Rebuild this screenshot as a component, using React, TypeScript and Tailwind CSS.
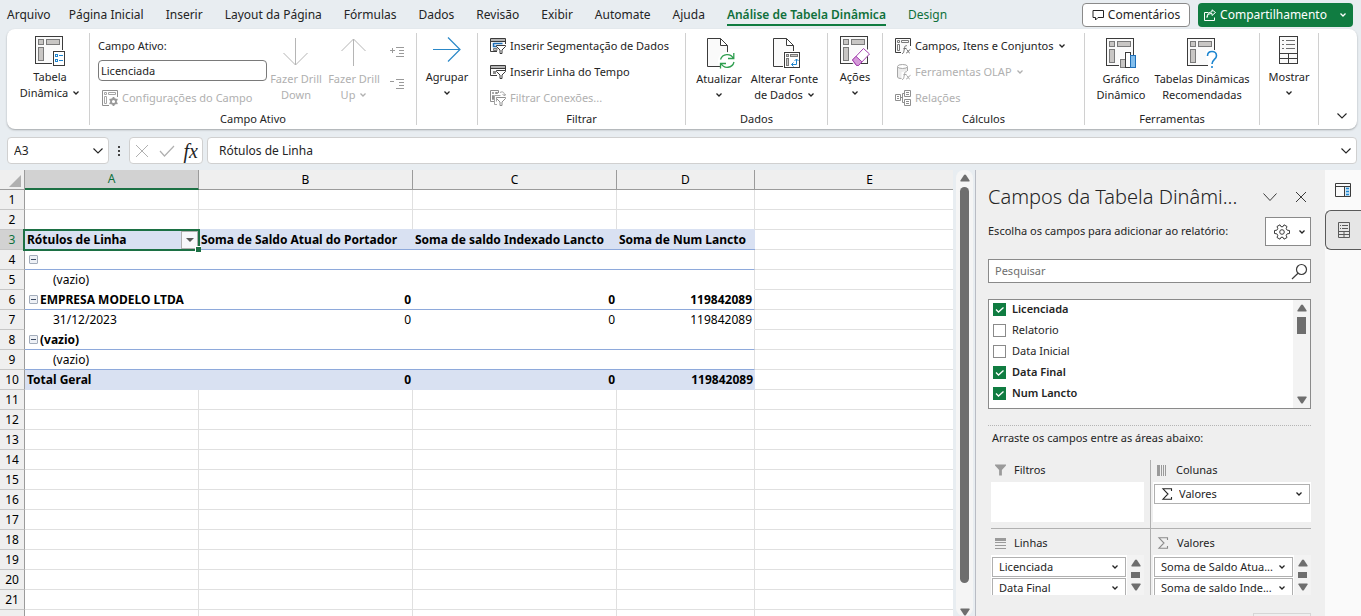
import { useState, type ReactNode } from 'react'
import clsx from 'clsx'

type CellRow = {
  label?: string
  kind?: 'head' | 'group' | 'item' | 'total'
  values?: string[]
  line?: boolean
}

const tabs = [
  'Página Inicial',
  'Inserir',
  'Layout da Página',
  'Fórmulas',
  'Dados',
  'Revisão',
  'Exibir',
  'Automate',
  'Ajuda',
]

const pivotRows: Record<number, CellRow> = {
  3: {
    kind: 'head',
    label: 'Rótulos de Linha',
    values: ['Soma de Saldo Atual do Portador', 'Soma de saldo Indexado Lancto', 'Soma de Num Lancto'],
    line: true,
  },
  4: { kind: 'group', label: '', line: true },
  5: { kind: 'item', label: '(vazio)' },
  6: { kind: 'group', label: 'EMPRESA MODELO LTDA', values: ['0', '0', '119842089'], line: true },
  7: { kind: 'item', label: '31/12/2023', values: ['0', '0', '119842089'] },
  8: { kind: 'group', label: '(vazio)', line: true },
  9: { kind: 'item', label: '(vazio)', line: true },
  10: { kind: 'total', label: 'Total Geral', values: ['0', '0', '119842089'] },
}

const fieldNames = ['Licenciada', 'Relatorio', 'Data Inicial', 'Data Final', 'Num Lancto']

/* ---------- icons ---------- */

function Chevron({ className }: { className?: string }) {
  return (
    <svg viewBox="0 0 8 6" className={clsx('h-[6px] w-2 shrink-0', className)} fill="none" stroke="currentColor" strokeWidth="1.3">
      <path d="M1.500 1.500 4 4l2.500-2.500" />
    </svg>
  )
}

function WideChevron({ className }: { className?: string }) {
  return (
    <svg viewBox="0 0 12 8" className={clsx('h-2 w-3 shrink-0', className)} fill="none" stroke="currentColor" strokeWidth="1.1">
      <path d="M1.500 1.500 6 6l4.500-4.500" />
    </svg>
  )
}

function Triangle({ down }: { down?: boolean }) {
  return (
    <svg viewBox="0 0 10 8" className="h-2 w-[10px] shrink-0 fill-[#6e6e6e]">
      <path d={down ? 'M1 .5h8q1 0 .6.9L6 7q-1 1-2 0L.4 1.4Q0 .5 1 .5z' : 'M1 7.5h8q1 0 .6-.9L6 1Q5 0 4 1L.4 6.6Q0 7.5 1 7.5z'} />
    </svg>
  )
}

function PivotBase() {
  return (
    <g stroke="#3b3b3b">
      <rect x="1.5" y=".5" width="27" height="27" fill="#fafafa" />
      <g fill="#c8c6c4" stroke="#7a7a7a">
        <rect x="4.500" y="3.500" width="5" height="5" />
        <rect x="12.500" y="3.500" width="13" height="5" />
        <rect x="4.500" y="11.500" width="5" height="13" />
      </g>
    </g>
  )
}

function BigIcon({ children }: { children: ReactNode }) {
  return (
    <svg viewBox="0 0 32 32" className="mb-px h-8 w-8 shrink-0" fill="none">
      {children}
    </svg>
  )
}

function PivotTableIcon() {
  return (
    <BigIcon>
      <PivotBase />
      <path d="M18 14h14v17H18z" fill="#fff" />
      <rect x="19.500" y="15.500" width="11" height="14" fill="#fff" stroke="#3b3b3b" />
      <g stroke="#1e86d0">
        <rect x="21.500" y="18.500" width="2" height="2" />
        <rect x="21.500" y="23.500" width="2" height="2" />
        <path d="M25 19.500h4M25 24.500h4" />
      </g>
    </BigIcon>
  )
}

function ArrowIcon({ dir }: { dir: 'down' | 'up' | 'right' }) {
  return (
    <BigIcon>
      {dir === 'down' && <path d="M15.500 0v27M3.500 15l12 12 12-12" stroke="#b5b5b5" />}
      {dir === 'up' && <path d="M15.500 28V1M3.500 13l12-12 12 12" stroke="#b5b5b5" />}
      {dir === 'right' && <path d="M2 13.500h27M17 1.500l12 12-12 12" stroke="#2b88c8" strokeWidth="1.200" />}
    </BigIcon>
  )
}

function PageBase() {
  return <path d="M4.500.500h13l7 7v21h-20zM17.500.500v7h7" fill="#fafafa" stroke="#3b3b3b" />
}

function RefreshIcon() {
  return (
    <BigIcon>
      <PageBase />
      <circle cx="24" cy="23" r="9" fill="#fff" />
      <path d="M17.500 21.500a7 7 0 0 1 13-1M31 24a7 7 0 0 1-13 1.500M30.800 15v5.500H25M17.500 30.500V25.500H23" stroke="#2f9e4f" strokeWidth="1.300" />
    </BigIcon>
  )
}

function SourceIcon() {
  return (
    <BigIcon>
      <PageBase />
      <path d="M14 13h18v18H14z" fill="#fff" />
      <rect x="15.500" y="14.500" width="15" height="15" fill="#fff" stroke="#3b3b3b" />
      <g stroke="#7a7a7a" fill="#c8c6c4">
        <rect x="17.500" y="16.500" width="2" height="2" />
        <rect x="21.500" y="16.500" width="7" height="2" />
        <rect x="17.500" y="20.500" width="2" height="7" />
      </g>
      <path d="M22.500 26.500h5V21M25.500 23l2-2 2 2M24.500 24.500l-2 2 2 2" stroke="#1e86d0" />
    </BigIcon>
  )
}

function ActionsIcon() {
  return (
    <BigIcon>
      <PivotBase />
      <path d="m11 25 14-14 7 5-14 15z" fill="#fff" />
      <path d="m13.500 24 11-11.500 6 5.500-11 11.500h-2z" fill="#fff" stroke="#a33fae" />
      <path d="m13.500 24 3.500-3.700 6 5.600-3.500 3.600h-1.800z" fill="#d59ad9" stroke="#a33fae" />
    </BigIcon>
  )
}

function PivotChartIcon() {
  return (
    <BigIcon>
      <PivotBase />
      <path d="M14 20h5v-7h7v4h6v14H14z" fill="#fff" />
      <rect x="15.500" y="21.500" width="5" height="8" fill="#c8c6c4" stroke="#7a7a7a" />
      <rect x="20.500" y="14.500" width="5" height="15" fill="#fff" stroke="#3b3b3b" />
      <rect x="25.500" y="17.500" width="5" height="12" fill="#83beec" stroke="#1e6fb8" />
    </BigIcon>
  )
}

function RecommendedIcon() {
  return (
    <BigIcon>
      <PivotBase />
      <path d="M20 12h12v19H22v-9h-2z" fill="#fff" />
      <path d="M21.500 18c0-3 2-4.500 4.500-4.500s4.500 1.700 4.500 4.200c0 3.800-4.500 3.600-4.500 8.300M26 28v2" stroke="#1e86d0" strokeWidth="1.600" />
    </BigIcon>
  )
}

function ShowIcon() {
  return (
    <BigIcon>
      <rect x="6.500" y=".5" width="18" height="27" fill="#fafafa" stroke="#3b3b3b" />
      <path d="M6.500 17.500h18M6.500 22.500h18M15.500 17.500v10" stroke="#3b3b3b" />
      <path d="M9 4.500h2M13 4.500h9M9 8.500h2M13 8.500h9M9 12.500h2M13 12.500h9" stroke="#6e6e6e" />
    </BigIcon>
  )
}

function SmallIcon({ children }: { children: ReactNode }) {
  return (
    <svg viewBox="0 0 16 16" className="h-4 w-4 shrink-0" fill="none">
      {children}
    </svg>
  )
}

function FieldSettingsIcon() {
  return (
    <SmallIcon>
      <path d="M7 15.500H.5V.5h15V7" stroke="#8f8f8f" />
      <path d="M2.500 2.500h2v2h-2zM6.500 2.500h7v2h-7zM2.500 6.500h2v7h-2z" stroke="#a6a6a6" />
      <circle cx="11.500" cy="11.500" r="2.500" stroke="#9a9a9a" strokeWidth="1.800" />
      <path d="M11.500 7v2M11.500 14v2M7.500 9.200l1.800 1M13.700 12.800l1.800 1M15.500 9.200l-1.800 1M9.300 12.800l-1.800 1" stroke="#9a9a9a" strokeWidth="1.800" />
    </SmallIcon>
  )
}

function ExpandIcon({ plus }: { plus?: boolean }) {
  return (
    <SmallIcon>
      <path d={plus ? 'M1 5.500h5M3.500 3v5' : 'M1 4.500h4'} stroke="#9a9a9a" />
      <path d="M7 2.500h8M10 5.500h5M10 8.500h5M7 11.500h8" stroke="#9a9a9a" />
    </SmallIcon>
  )
}

const funnel = 'M6.500 7.500h9v1l-3.500 3.500v3.500h-2V12L6.500 8.500z'

function SlicerIcon() {
  return (
    <SmallIcon>
      <path d="M7 13.500H.5V.5h15V6" fill="#fafafa" stroke="#3b3b3b" />
      <path d="M1 1h14v2H1z" fill="#b5b5b5" />
      <path d="M.5 3.500h15" stroke="#3b3b3b" />
      <path d="M3.500 5.500h9M3.500 5v3.500H7" stroke="#1e6fb8" strokeWidth="1.500" />
      <path d="M3.500 10.500H7v2H3.500z" fill="#c8c6c4" stroke="#7a7a7a" />
      <path d={funnel} fill="#fff" stroke="#3b3b3b" />
    </SmallIcon>
  )
}

function TimelineIcon() {
  return (
    <SmallIcon>
      <path d="M7 11.500H.5V1.500h15V7" fill="#fafafa" stroke="#3b3b3b" />
      <path d="M1 2h14v2H1z" fill="#b5b5b5" />
      <path d="M.5 4.500h15" stroke="#3b3b3b" />
      <path d="M3 7h3v3H3z" fill="#8a8a8a" />
      <path d="M6.500 6.500h9v1L12 11v3.500h-2V11L6.500 7.500z" fill="#fff" stroke="#3b3b3b" />
    </SmallIcon>
  )
}

function ConnectionsIcon() {
  return (
    <SmallIcon>
      <path d="M4 11.500H.5V.5h8V3M2.500 2.500h1v1h-1zM5.500 2.500h2v1h-2zM2.500 5.500h1v4h-1z" stroke="#8f8f8f" />
      <path d="M7 14.500H4.500v-9h6M6.500 7.500v4M10 2.500c3-1.500 4.500 0 4.500 3M12.500 4l2 2 1.500-2" stroke="#a6a6a6" />
      <path d={funnel} fill="#fff" stroke="#8f8f8f" />
    </SmallIcon>
  )
}

function FxMark({ color }: { color: string }) {
  return <path d="M7 15.500c1.500 0 1.700-1 2-3l.6-3c.3-1.600 1-2 2.200-1.800M8.500 10.500h3M11.500 11.500c1.300 0 1.700 3.500 3.200 3.500M15.500 11.300c-1.500 0-2.500 3.700-4.300 3.700" stroke={color} />
}

function CalcFieldsIcon() {
  return (
    <SmallIcon>
      <path d="M6 14.500H.5V.5h15V8" fill="#fafafa" stroke="#3b3b3b" />
      <path d="M2.500 2.500h2v2h-2zM6.500 2.500h7v2h-7zM2.500 6.500h2v6h-2z" stroke="#7a7a7a" />
      <FxMark color="#6e6e6e" />
    </SmallIcon>
  )
}

function OlapIcon() {
  return (
    <SmallIcon>
      <path d="M2.500 3v10c0 1 2 1.500 4 1.500V8l6-1V3z" fill="#ececec" />
      <path d="M2.500 3v10c0 1 2 1.500 4 1.500M12.500 3v4" stroke="#a6a6a6" />
      <ellipse cx="7.500" cy="2.500" rx="5" ry="2" fill="#fff" stroke="#a6a6a6" />
      <FxMark color="#a6a6a6" />
    </SmallIcon>
  )
}

function RelationsIcon() {
  return (
    <SmallIcon>
      <path d="M.5 4.500h5v6h-5zM9.500.500h6v6h-6zM9.500 9.500h6v6h-6zM5.500 7.500h2M9.500 3.500h-2v9h2M2 6.500h2M2 8.500h2M11 2.500h3M11 4.500h3M11 11.500h3M11 13.500h3" stroke="#8f8f8f" />
    </SmallIcon>
  )
}

function GearIcon() {
  return (
    <svg viewBox="0 0 16 16" className="h-4 w-4 shrink-0" fill="none" stroke="#3b3b3b">
      <path d="M6 .8 7 2.700h2L10 .8l3 1.700-.8 2.200 1 1.500 2.300.3v3l-2.300.3-1 1.500.8 2.200-3 1.700-1-1.900H7l-1 1.900-3-1.700.8-2.200-1-1.500L.5 9.500v-3l2.300-.3 1-1.500L3 2.500z" />
      <circle cx="8" cy="8" r="2.300" />
    </svg>
  )
}

function SigmaIcon({ className }: { className?: string }) {
  return (
    <svg viewBox="0 0 12 12" className={clsx('h-3 w-3 shrink-0', className)} fill="none" stroke="currentColor" strokeWidth="1.100">
      <path d="M10.500 3V.8H2L7 6l-5 5.200h8.500V9" />
    </svg>
  )
}

/* ---------- ribbon ---------- */

function Group({ label, className, children }: { label?: string; className: string; children: ReactNode }) {
  return (
    <section className={clsx('my-1 flex shrink-0 flex-col border-r border-[#d0d0d0]', className)}>
      <div className="flex h-[78px] shrink-0">{children}</div>
      {label && <div className="h-4 shrink-0 text-center leading-4">{label}</div>}
    </section>
  )
}

function BigButton({ icon, lines, arrow, disabled, className }: { icon: ReactNode; lines: string[]; arrow?: boolean; disabled?: boolean; className?: string }) {
  return (
    <button type="button" disabled={disabled} className={clsx('flex flex-col items-center leading-4 whitespace-nowrap', disabled && 'text-[#b0b0b0]', className)}>
      {icon}
      {lines.map((line, i) => (
        <span key={line} className="flex h-4 items-center gap-1">
          {line}
          {arrow && lines.length > 1 && i === lines.length - 1 && <Chevron />}
        </span>
      ))}
      {arrow && lines.length === 1 && (
        <span className="flex h-4 items-center">
          <Chevron />
        </span>
      )}
    </button>
  )
}

function RowButton({ icon, label, arrow, disabled }: { icon: ReactNode; label: string; arrow?: boolean; disabled?: boolean }) {
  return (
    <button type="button" disabled={disabled} className={clsx('flex h-[26px] items-center gap-1 whitespace-nowrap', disabled && 'text-[#b0b0b0]')}>
      {icon}
      {label}
      {arrow && <Chevron />}
    </button>
  )
}

function Ribbon() {
  return (
    <div className="mr-1 ml-[7px] flex h-[100px] rounded-lg bg-white text-[11px] shadow-[0_1px_2px_rgba(0,0,0,.3)]">
      <Group className="w-[83px]">
        <BigButton className="w-full pt-[3px] pl-1" icon={<PivotTableIcon />} lines={['Tabela', 'Dinâmica']} arrow />
      </Group>
      <Group className="w-[327px]" label="Campo Ativo">
        <div className="ml-2 flex w-[169px] flex-col">
          <label htmlFor="active-field" className="h-[27px] leading-[26px]">
            Campo Ativo:
          </label>
          <input id="active-field" defaultValue="Licenciada" className="h-[21px] rounded border border-[#7a7a7a] px-[2px] outline-none" />
          <div className="mt-1 ml-1">
            <RowButton icon={<FieldSettingsIcon />} label="Configurações do Campo" disabled />
          </div>
        </div>
        <BigButton className="w-[58px] pt-[5px]" icon={<ArrowIcon dir="down" />} lines={['Fazer Drill', 'Down']} disabled />
        <BigButton className="w-[58px] pt-[5px]" icon={<ArrowIcon dir="up" />} lines={['Fazer Drill', 'Up']} arrow disabled />
        <div className="ml-[6px] flex flex-col gap-4 pt-3">
          <button type="button" aria-label="Expandir campo">
            <ExpandIcon plus />
          </button>
          <button type="button" aria-label="Recolher campo">
            <ExpandIcon />
          </button>
        </div>
      </Group>
      <Group className="w-[61px]">
        <BigButton className="w-full pt-[3px]" icon={<ArrowIcon dir="right" />} lines={['Agrupar']} arrow />
      </Group>
      <Group className="w-[208px]" label="Filtrar">
        <div className="ml-3 flex flex-col">
          <RowButton icon={<SlicerIcon />} label="Inserir Segmentação de Dados" />
          <RowButton icon={<TimelineIcon />} label="Inserir Linha do Tempo" />
          <RowButton icon={<ConnectionsIcon />} label="Filtrar Conexões..." disabled />
        </div>
      </Group>
      <Group className="w-[142px]" label="Dados">
        <BigButton className="w-[66px] pt-[5px]" icon={<RefreshIcon />} lines={['Atualizar']} arrow />
        <BigButton className="w-[65px] pt-[5px]" icon={<SourceIcon />} lines={['Alterar Fonte', 'de Dados']} arrow />
      </Group>
      <Group className="w-[55px]">
        <BigButton className="w-full pt-[3px]" icon={<ActionsIcon />} lines={['Ações']} arrow />
      </Group>
      <Group className="w-[202px]" label="Cálculos">
        <div className="ml-3 flex flex-col">
          <RowButton icon={<CalcFieldsIcon />} label="Campos, Itens e Conjuntos" arrow />
          <RowButton icon={<OlapIcon />} label="Ferramentas OLAP" arrow disabled />
          <RowButton icon={<RelationsIcon />} label="Relações" disabled />
        </div>
      </Group>
      <Group className="w-[175px]" label="Ferramentas">
        <BigButton className="w-[72px] pt-[5px]" icon={<PivotChartIcon />} lines={['Gráfico', 'Dinâmico']} />
        <BigButton className="w-[90px] pt-[5px]" icon={<RecommendedIcon />} lines={['Tabelas Dinâmicas', 'Recomendadas']} />
      </Group>
      <Group className="w-[59px]">
        <BigButton className="w-full pt-[3px]" icon={<ShowIcon />} lines={['Mostrar']} arrow />
      </Group>
      <button type="button" aria-label="Recolher faixa" className="ml-auto self-end p-[9px]">
        <WideChevron />
      </button>
    </div>
  )
}

function TopBar() {
  return (
    <header className="flex h-[29px] items-center justify-between pr-2 pl-[7px] text-xs">
      <nav className="flex h-full items-center gap-[22px] whitespace-nowrap">
        <a href="#arquivo" className="-mr-1">Arquivo</a>
        {tabs.map((tab) => (
          <a key={tab} href="#guia">
            {tab}
          </a>
        ))}
        <a href="#analise" className="flex h-[23px] items-center border-b-2 border-[#107c41] pt-[2px] font-semibold text-[#0f703b]">
          Análise de Tabela Dinâmica
        </a>
        <a href="#design" className="text-[#0f703b]">
          Design
        </a>
      </nav>
      <div className="flex gap-2">
        <button type="button" className="flex h-6 w-[108px] items-center justify-center gap-1 rounded border border-[#8a8a8a] bg-white">
          <svg viewBox="0 0 12 12" className="h-3 w-3" fill="none" stroke="#242424">
            <path d="M1 1.500h10.500v7H6L3.500 11V8.500H1z" />
          </svg>
          Comentários
        </button>
        <button type="button" className="flex h-6 w-[155px] items-center justify-center gap-1 rounded bg-[#107c41] text-white">
          <svg viewBox="0 0 12 12" className="h-3 w-3" fill="none" stroke="#fff">
            <path d="M4.500 3.500h-4v8h10v-3M3 8.500c.5-3 2-4 5-4v2l3.500-3L8 .8v2C5 3 3 5 3 8.500z" />
          </svg>
          Compartilhamento
          <Chevron className="ml-2" />
        </button>
      </div>
    </header>
  )
}

function FormulaBar() {
  return (
    <div className="mt-2 mr-1 mb-[6px] ml-[7px] flex h-[27px] text-xs">
      <div className="flex w-[102px] items-center rounded border border-[#d0d0d0] bg-white pr-1">
        <input aria-label="Caixa de nome" defaultValue="A3" className="min-w-0 flex-1 px-[6px] outline-none" />
        <WideChevron />
      </div>
      <div className="flex w-5 flex-col items-center justify-center gap-[2px]">
        <i className="h-[2px] w-[2px] bg-[#444]" />
        <i className="h-[2px] w-[2px] bg-[#444]" />
        <i className="h-[2px] w-[2px] bg-[#444]" />
      </div>
      <div className="flex w-[74px] items-center justify-between rounded border border-[#d0d0d0] bg-white px-1">
        <svg viewBox="0 0 16 16" className="h-4 w-4" fill="none" stroke="#b0b0b0">
          <path d="m2 2 12 12M14 2 2 14" />
        </svg>
        <svg viewBox="0 0 16 16" className="h-4 w-4" fill="none" stroke="#b0b0b0" strokeWidth="1.200">
          <path d="m1 8 4.500 5L15 3" />
        </svg>
        <button type="button" aria-label="Inserir função" className="font-['Liberation_Serif',serif] text-xl leading-5 text-[#242424] italic">
          fx
        </button>
      </div>
      <div className="ml-1 flex min-w-0 flex-1 items-center rounded border border-[#d0d0d0] bg-white pr-1">
        <input aria-label="Barra de fórmulas" defaultValue="Rótulos de Linha" className="min-w-0 flex-1 px-[11px] outline-none" />
        <WideChevron />
      </div>
    </div>
  )
}

/* ---------- grid ---------- */

function PivotRow({ index, last }: { index: number; last: boolean }) {
  const row = pivotRows[index]
  const filled = row?.kind === 'head' || row?.kind === 'total'
  const strong = row && row.kind !== 'item'
  const border = !row
    ? index === 2
      ? 'border-r border-b border-r-[#e0e0e0] border-b-[#d9e1f2]'
      : 'border-r border-b border-[#e0e0e0]'
    : row.line
      ? 'border-b border-[#8ea9db]'
      : filled
        ? 'border-b border-[#d9e1f2]'
        : 'border-b border-white'

  return (
    <tr className="h-5">
      <th
        scope="row"
        className={clsx(
          'border-r border-b p-0 text-center leading-[19px] font-normal',
          index === 3 ? 'border-r-[#107c41] border-b-[#c6c6c6] bg-[#d2d2d2] text-[#0f703b]' : 'border-r-[#9b9b9b] border-b-[#c6c6c6] bg-[#efefef]',
        )}
      >
        {!last && index}
      </th>
      <td className={clsx('relative px-[2px] py-0', border, filled && 'bg-[#d9e1f2]', strong && 'font-bold')}>
        <div className={clsx('flex h-[19px] items-center leading-[19px]', row?.kind === 'item' && 'pl-[26px]')}>
          {row?.kind === 'group' && (
            <button type="button" aria-label="Recolher" className="mr-[2px] ml-[2px] grid h-[9px] w-[9px] place-items-center rounded-[1px] border border-[#a3acba] bg-[#eef1f6]">
              <i className="h-px w-[5px] bg-[#3d4b63]" />
            </button>
          )}
          {row?.label}
        </div>
        {index === 3 && (
          <div className="pointer-events-none absolute -top-px -right-px -bottom-[2px] -left-[2px] z-10 border-2 border-[#1c7044]">
            <button type="button" aria-label="Filtrar rótulos" className="pointer-events-auto absolute top-0 right-0 grid h-[18px] w-[17px] place-items-center border border-[#b0b0b0] bg-[#f7f8fb]">
              <svg viewBox="0 0 8 4" className="h-1 w-2 fill-[#5a5a5a]">
                <path d="M0 0h8L4 4z" />
              </svg>
            </button>
            <i className="absolute -right-[3px] -bottom-[3px] h-[6px] w-[6px] border-t border-l border-white bg-[#1c7044]" />
          </div>
        )}
      </td>
      {[0, 1, 2].map((col) => (
        <td
          key={col}
          className={clsx(
            'px-[2px] py-0 leading-[19px] whitespace-nowrap',
            border,
            filled && 'bg-[#d9e1f2]',
            strong && 'font-bold',
            row?.kind !== 'head' && 'text-right',
            row && !filled && col === 2 && 'border-r border-r-[#e0e0e0]',
          )}
        >
          {row?.values?.[col]}
        </td>
      ))}
      <td className="border-r border-b border-[#e0e0e0]" />
    </tr>
  )
}

function Sheet() {
  return (
    <div className="min-w-0 flex-1 overflow-hidden bg-white">
      <table className="w-[985px] table-fixed border-separate border-spacing-0 text-xs text-black">
        <colgroup>
          <col className="w-[25px]" />
          <col className="w-[174px]" />
          <col className="w-[214px]" />
          <col className="w-[204px]" />
          <col className="w-[138px]" />
          <col className="w-[230px]" />
        </colgroup>
        <thead>
          <tr className="h-5 bg-[#efefef]">
            <th aria-label="Selecionar tudo" className="border-r border-b border-[#9b9b9b] p-0">
              <svg viewBox="0 0 12 12" className="mt-[2px] ml-[9px] h-3 w-3 fill-[#b0b0b0]">
                <path d="M12 0v12H0z" />
              </svg>
            </th>
            {['A', 'B', 'C', 'D', 'E'].map((name) => (
              <th
                key={name}
                scope="col"
                className={clsx(
                  'border-r p-0 font-normal',
                  name === 'A' ? 'border-b-2 border-r-[#9b9b9b] border-b-[#1c7044] bg-[#d2d2d2] leading-[18px] text-[#0f703b]' : 'border-b border-[#9b9b9b] leading-[19px]',
                )}
              >
                {name}
              </th>
            ))}
          </tr>
        </thead>
        <tbody>
          {Array.from({ length: 22 }, (_, i) => (
            <PivotRow key={i} index={i + 1} last={i === 21} />
          ))}
        </tbody>
      </table>
    </div>
  )
}

function SheetScrollbar() {
  return (
    <div className="mr-[2px] ml-[3px] flex w-[17px] shrink-0 flex-col items-center rounded-lg bg-[#f5f5f5] pt-1">
      <Triangle />
      <div className="mt-[5px] mb-[25px] w-[9px] flex-1 rounded-full bg-[#6e6e6e]" />
      <Triangle down />
    </div>
  )
}

/* ---------- field pane ---------- */

function FieldList() {
  const [checked, setChecked] = useState(['Licenciada', 'Data Final', 'Num Lancto'])
  const toggle = (name: string) =>
    setChecked((current) => (current.includes(name) ? current.filter((item) => item !== name) : [...current, name]))

  return (
    <div className="mt-4 flex h-[110px] border border-[#8a8a8a] bg-white">
      <div className="-mt-px flex-1 pl-1">
        {fieldNames.map((name) => (
          <label key={name} className={clsx('flex h-[21px] items-center gap-[6px]', checked.includes(name) && 'font-semibold')}>
            <span className="grid">
              <input
                type="checkbox"
                checked={checked.includes(name)}
                onChange={() => toggle(name)}
                className="peer col-start-1 row-start-1 h-[13px] w-[13px] appearance-none border border-[#8a8a8a] bg-white checked:border-[#107c41] checked:bg-[#107c41]"
              />
              <svg viewBox="0 0 13 13" className="pointer-events-none col-start-1 row-start-1 hidden h-[13px] w-[13px] peer-checked:block" fill="none" stroke="#fff" strokeWidth="1.300">
                <path d="m3 6.500 2.500 2.500L10.500 4.500" />
              </svg>
            </span>
            {name}
          </label>
        ))}
      </div>
      <div className="flex w-[17px] flex-col items-center bg-[#f3f3f3] py-1">
        <Triangle />
        <div className="mt-[5px] h-[17px] w-[9px] bg-[#6e6e6e]" />
        <div className="mt-auto">
          <Triangle down />
        </div>
      </div>
    </div>
  )
}

function AreaItem({ label, sigma }: { label: string; sigma?: boolean }) {
  return (
    <button type="button" className="flex h-5 w-full shrink-0 items-center border border-[#b0b0b0] bg-white px-[6px] whitespace-nowrap">
      {sigma && <SigmaIcon className="mr-[6px]" />}
      <span className="truncate">{label}</span>
      <Chevron className="ml-auto" />
    </button>
  )
}

function Area({ icon, title, items, scroll, sigma }: { icon: ReactNode; title: string; items: string[]; scroll?: boolean; sigma?: boolean }) {
  return (
    <div>
      <div className="flex h-5 items-center gap-2 pl-1">
        {icon}
        {title}
      </div>
      <div className="mt-[2px] flex h-10 overflow-hidden bg-white">
        <div className="flex min-w-0 flex-1 flex-col gap-px p-px pt-[2px]">
          {items.map((item) => (
            <AreaItem key={item} label={item} sigma={sigma} />
          ))}
        </div>
        {scroll && (
          <div className="flex w-[17px] flex-col items-center justify-between bg-[#f3f3f3] py-1">
            <Triangle />
            <div className="h-[6px] w-[9px] bg-[#6e6e6e]" />
            <Triangle down />
          </div>
        )}
      </div>
    </div>
  )
}

function FieldPane() {
  return (
    <aside className="w-[350px] shrink-0 overflow-hidden border-l border-[#b9bcc4] bg-[#efefef] pr-[14px] pl-3 text-[11px]">
      <div className="flex h-[47px] items-center pt-[7px]">
        <h2 className="flex-1 text-xl font-light whitespace-nowrap">Campos da Tabela Dinâmi...</h2>
        <button type="button" aria-label="Opções do painel" className="mr-[18px]">
          <svg viewBox="0 0 14 8" className="h-2 w-[14px]" fill="none" stroke="#3b3b3b">
            <path d="m.5.500 6.500 7 6.500-7" />
          </svg>
        </button>
        <button type="button" aria-label="Fechar" className="mr-1">
          <svg viewBox="0 0 12 12" className="h-3 w-3" fill="none" stroke="#3b3b3b">
            <path d="m1 1 10 10M11 1 1 11" />
          </svg>
        </button>
      </div>
      <div className="flex items-center justify-between">
        <span>Escolha os campos para adicionar ao relatório:</span>
        <button type="button" aria-label="Ferramentas" className="flex h-[29px] w-[46px] items-center justify-center gap-2 border border-[#8a8a8a] bg-white pl-1">
          <GearIcon />
          <Chevron />
        </button>
      </div>
      <div className="mt-[13px] flex h-6 items-center border border-[#8a8a8a] bg-white pr-[2px]">
        <input aria-label="Pesquisar" placeholder="Pesquisar" className="min-w-0 flex-1 px-[6px] outline-none placeholder:text-[#6e6e6e]" />
        <svg viewBox="0 0 17 17" className="h-[17px] w-[17px]" fill="none" stroke="#3b3b3b" strokeWidth="1.200">
          <circle cx="10.500" cy="6.500" r="5" />
          <path d="M7 10.200 1 16" />
        </svg>
      </div>
      <FieldList />
      <div className="mt-4 border-t border-dotted border-[#b5b5b5]" />
      <p className="pt-[3px] pl-1 leading-[17px]">Arraste os campos entre as áreas abaixo:</p>
      <div className="mt-[14px] ml-[3px] grid grid-cols-[160px_1fr]">
        <div className="border-r border-b border-[#b0b0b0] pr-[6px] pb-[6px]">
          <Area
            icon={
              <svg viewBox="0 0 12 12" className="h-3 w-[11px] fill-[#9a9a9a]">
                <path d="M0 0h12v1L7.500 6v6h-3V6L0 1z" />
              </svg>
            }
            title="Filtros"
            items={[]}
          />
        </div>
        <div className="border-b border-[#b0b0b0] pb-[6px] pl-[2px]">
          <Area
            icon={
              <svg viewBox="0 0 11 11" className="h-[11px] w-[11px]" fill="none" stroke="#9a9a9a">
                <path d="M1.500 0v11" strokeWidth="3" />
                <path d="M4.500 0v11M6.500 0v11M8.500 0v11" />
              </svg>
            }
            title="Colunas"
            items={['Valores']}
            sigma
          />
        </div>
        <div className="border-r border-[#b0b0b0] pt-1 pr-[6px]">
          <Area
            icon={
              <svg viewBox="0 0 11 11" className="h-[11px] w-[11px]" fill="none" stroke="#9a9a9a">
                <path d="M0 1.500h11" strokeWidth="3" />
                <path d="M0 4.500h11M0 7.500h11M0 10.500h11" />
              </svg>
            }
            title="Linhas"
            items={['Licenciada', 'Data Final']}
            scroll
          />
        </div>
        <div className="pt-1 pl-[2px]">
          <Area icon={<SigmaIcon className="text-[#8a8a8a]" />} title="Valores" items={['Soma de Saldo Atua...', 'Soma de saldo Inde...']} scroll />
        </div>
      </div>
      <button type="button" disabled aria-label="Atualizar layout" className="mt-[18px] ml-auto block h-6 w-[58px] border border-[#d6d6d6]" />
    </aside>
  )
}

function SideRail() {
  return (
    <div className="flex w-9 shrink-0 flex-col bg-[#fafafa]">
      <button type="button" aria-label="Painéis" className="grid h-10 place-items-center">
        <svg viewBox="0 0 16 16" className="h-4 w-4" fill="none">
          <path d="M.5 1.500h15v13H.5zM.5 4.500h15" stroke="#3b3b3b" />
          <path d="M9.500 5v9" stroke="#3b3b3b" />
          <path d="M10 5h5v9h-5z" fill="#d3e8f8" />
          <path d="M11 6.500h3M11 9.500h3M11 12.500h3" stroke="#1e86d0" strokeWidth="1.500" />
        </svg>
      </button>
      <button type="button" aria-label="Campos da tabela dinâmica" className="grid h-10 place-items-center rounded-l-md border border-r-0 border-[#5a5a5a] bg-[#e6e6e6]">
        <svg viewBox="0 0 12 16" className="h-4 w-3" fill="none" stroke="#5a5a5a">
          <path d="M.5.500h11v15H.5zM.5 9.500h11M.5 12.500h11M6 9.500v6M2 3.500h1M4 3.500h6M2 6.500h1M4 6.500h6" />
        </svg>
      </button>
    </div>
  )
}

export default function App() {
  return (
    <div className="flex h-screen flex-col overflow-hidden bg-[#e8edf1] font-['Noto_Sans',sans-serif] text-[#242424]">
      <TopBar />
      <Ribbon />
      <FormulaBar />
      <main className="flex min-h-0 flex-1">
        <Sheet />
        <SheetScrollbar />
        <FieldPane />
        <SideRail />
      </main>
    </div>
  )
}
